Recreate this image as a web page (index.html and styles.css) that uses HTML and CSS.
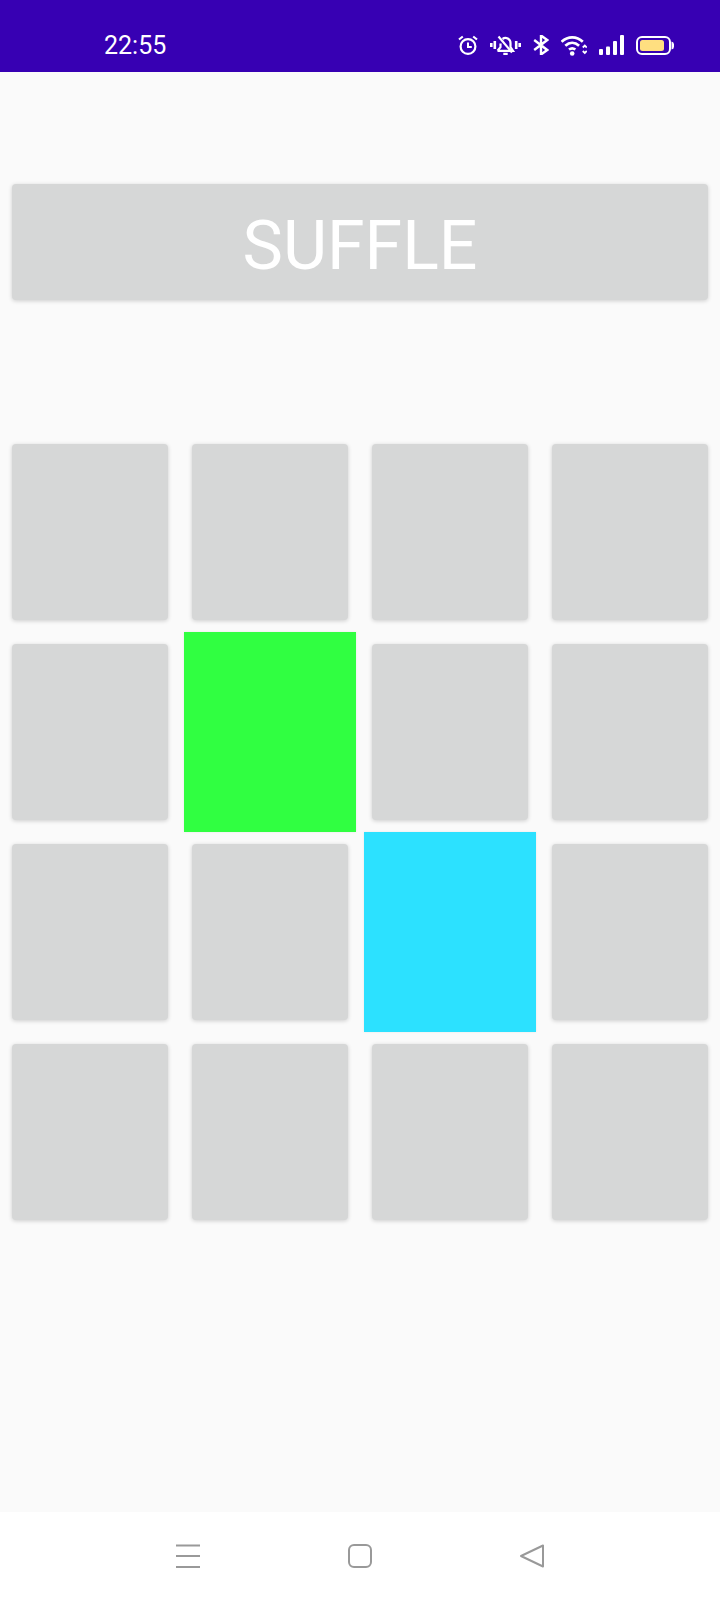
FILE: index.html
```html
<!DOCTYPE html>
<html lang="en">
<head>
    <meta charset="utf-8">
    <link rel="stylesheet" href="styles.css">
</head>
<body>
    <div class="status">
        <span class="time">22:55</span>
        <div class="status-icons">
            <svg width="20" height="20" viewBox="0 0 20 20" fill="none" stroke="#fff" stroke-width="2.200"><circle cx="10" cy="11.500" r="7.400"/><path d="M10 7.500v4.500h3.800" stroke-width="2"/><path d="M1 4.500l3.800-3M19 4.500l-3.800-3"/></svg>
            <svg width="31" height="20" viewBox="0 0 31 20" fill="none" stroke="#fff" stroke-width="2.200"><path d="M7.500 15.800h15.500l-2.500-3.600V8a5 5 0 0 0-8-4M10.500 8.500v3.700L7.500 15.800"/><path d="M8.500 1.500l13.500 16"/><path d="M13.300 18.900h4.400" stroke-width="2.200"/><path d="M1.300 8v4M4.800 6v8M26.200 6v8M29.700 8v4" stroke-width="2.600"/></svg>
            <svg width="16" height="20" viewBox="0 0 16 20" fill="none" stroke="#fff" stroke-width="2.400"><path d="M1.200 5l13 10-6.200 4.500V.5L14.200 5 1.200 15"/></svg>
            <svg width="26" height="21" viewBox="0 0 26 21" fill="none" stroke="#fff" stroke-width="2.700"><path d="M.6 6.800c6.200-6 15-6 21.200 0M4.300 10.800c4.200-3.800 9.600-3.800 13.800 0M8 14.500c2-1.500 4.400-1.500 6.400 0"/><circle cx="11.200" cy="18.500" r="2.300" fill="#fff" stroke="none"/><path d="M21.800 12.500l2-2 2 2M21.800 16l2 2 2-2" stroke-width="1.800"/></svg>
            <svg width="25" height="20" viewBox="0 0 25 20" fill="#fff"><rect x="0" y="14" width="4" height="6" rx="1"/><rect x="7" y="11.500" width="4" height="8.500" rx="1"/><rect x="14" y="6" width="4" height="14" rx="1"/><rect x="21" y="0" width="4" height="20" rx="1"/></svg>
            <svg width="38" height="19" viewBox="0 0 38 19"><rect x="1" y="1" width="33" height="17" rx="5" fill="none" stroke="#fff" stroke-width="2"/><rect x="4" y="4" width="24" height="11" rx="2.500" fill="#ffdf80"/><path d="M35.500 5.500a3 3 0 0 1 2.500 3v2a3 3 0 0 1-2.500 3z" fill="#fff"/></svg>
        </div>
    </div>

    <main class="content">
        <button class="suffle">SUFFLE</button>
        <div class="board">
            <div class="cell"></div>
            <div class="cell"></div>
            <div class="cell"></div>
            <div class="cell"></div>
            <div class="cell"></div>
            <div class="cell green"></div>
            <div class="cell"></div>
            <div class="cell"></div>
            <div class="cell"></div>
            <div class="cell"></div>
            <div class="cell blue"></div>
            <div class="cell"></div>
            <div class="cell"></div>
            <div class="cell"></div>
            <div class="cell"></div>
            <div class="cell"></div>
        </div>
    </main>

    <nav class="navbar">
        <svg width="26" height="24" viewBox="0 0 26 24" fill="none" stroke="#999" stroke-width="2"><path d="M1 1.500h24M1 12h24M1 23h24"/></svg>
        <svg width="26" height="26" viewBox="0 0 26 26" fill="none" stroke="#999" stroke-width="2"><rect x="2" y="2" width="22" height="22" rx="5"/></svg>
        <svg width="26" height="26" viewBox="0 0 26 26" fill="none" stroke="#999" stroke-width="2" stroke-linejoin="round"><path d="M24 2.500v21L2 13z"/></svg>
    </nav>
</body>
</html>
```

FILE: styles.css
```css
*{margin:0;padding:0;box-sizing:border-box;}
html,body{height:100%;}
body{width:720px;height:1600px;background:#fafafa;font-family:Roboto,sans-serif;display:flex;flex-direction:column;overflow:hidden;}

.status{height:72px;background:#3700b3;color:#fff;display:flex;align-items:center;justify-content:space-between;padding:18px 46px 0 104px;flex:none;}
.time{font-size:25px;}
.status-icons{display:flex;align-items:center;gap:12px;}

.content{flex:1;padding-top:112px;}
.suffle{display:block;width:696px;height:116px;margin:0 12px;padding-top:8px;border:0;border-radius:4px;background:#d6d7d7;color:#fff;font-family:Roboto,sans-serif;font-size:68px;box-shadow:0 1px 4px rgba(0,0,0,.18);}

.board{display:grid;grid-template-columns:repeat(4,180px);grid-auto-rows:200px;margin-top:132px;}
.cell{margin:12px;border-radius:4px;background:#d6d7d7;box-shadow:0 1px 4px rgba(0,0,0,.18);}
.cell.green,.cell.blue{margin:0 4px;border-radius:0;box-shadow:0 0 2px rgba(0,0,0,.08);}
.cell.green{background:#30ff41;}
.cell.blue{background:#2ce1ff;}

.navbar{height:88px;background:#fff;flex:none;display:flex;align-items:center;justify-content:center;gap:146px;}
```
